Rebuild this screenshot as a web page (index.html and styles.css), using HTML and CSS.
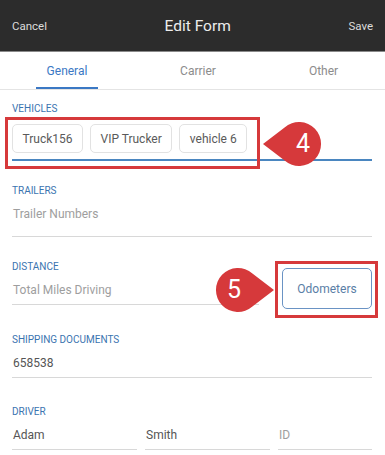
FILE: index.html
```html
<!DOCTYPE html>
<html lang="en">
<head>
  <meta charset="UTF-8">
  <meta name="viewport" content="width=device-width, initial-scale=1.0">
  <title>Edit Form</title>
  <link rel="stylesheet" href="styles.css">
</head>

<body>
  <div class="screen">
    <header class="top-bar">
      <span class="top-action">Cancel</span>
      <span class="top-title">Edit Form</span>
      <span class="top-action">Save</span>
    </header>

    <nav class="tabs">
      <span class="tab active">General</span>
      <span class="tab">Carrier</span>
      <span class="tab">Other</span>
    </nav>

    <form class="form">
      <div class="field vehicles">
        <label>Vehicles</label>
        <div class="chips">
          <span class="chip">Truck156</span>
          <span class="chip">VIP Trucker</span>
          <span class="chip">vehicle 6</span>
        </div>
      </div>

      <div class="field trailers">
        <label>Trailers</label>
        <div class="input placeholder tall">Trailer Numbers</div>
      </div>

      <div class="field distance">
        <div class="distance-main">
          <label>Distance</label>
          <div class="input placeholder">Total Miles Driving</div>
        </div>
        <button type="button" class="odometers">Odometers</button>
      </div>

      <div class="field shipping">
        <label>Shipping Documents</label>
        <div class="input">658538</div>
      </div>

      <div class="field driver">
        <label>Driver</label>
        <div class="driver-row">
          <div class="input">Adam</div>
          <div class="input">Smith</div>
          <div class="input placeholder">ID</div>
        </div>
      </div>
    </form>

    <!-- annotation overlays -->
    <div class="mark mark-vehicles"></div>
    <div class="mark mark-odometers"></div>

    <svg class="callout callout-4" width="70" height="50" viewBox="0 0 70 50">
      <path d="M2 24 L23.6 7.4 A22 22 0 1 1 23.6 40.6 Z" fill="#d6393b"/>
      <text x="42" y="32" text-anchor="middle">4</text>
    </svg>

    <svg class="callout callout-5" width="70" height="50" viewBox="0 0 70 50">
      <path d="M66 24 L44.4 7.4 A22 22 0 1 0 44.4 40.6 Z" fill="#d6393b"/>
      <text x="26" y="32" text-anchor="middle">5</text>
    </svg>
  </div>
</body>
</html>
```

FILE: styles.css
```css
body {
  margin: 0;
  font-family: Roboto, "Noto Sans", Arial, sans-serif;
  background-color: #fff;
}

.screen {
  position: relative;
  width: 385px;
  height: 455px;
  overflow: hidden;
}

.top-bar {
  height: 51px;
  background-color: #2c2c2c;
  border-bottom: 1px solid #8a8a8a;
  display: flex;
  align-items: center;
  justify-content: space-between;
  padding: 0 12px;
}

.top-action {
  font-size: 11.5px;
  color: #dcdcdc;
}

.top-title {
  font-size: 15.5px;
  color: #ececec;
}

.tabs {
  display: grid;
  grid-template-columns: 134px 128px 123px;
  height: 37px;
  border-bottom: 1px solid #e4e4e4;
}

.tab {
  display: flex;
  align-items: center;
  justify-content: center;
  font-size: 12px;
  color: #8c8c8c;
  padding-top: 1px;
}

.tab.active {
  color: #3b78c4;
  box-shadow: inset 0 -2px 0 #3b78c4;
  margin: 0 36px;
}

.form {
  padding: 13px 13px 0 12px;
}

.field label {
  display: block;
  font-size: 10px;
  line-height: 12px;
  color: #3b74b0;
  text-transform: uppercase;
  margin-bottom: 7px;
}

.input {
  font-size: 12px;
  line-height: 20px;
  color: #555;
  padding-left: 1px;
  padding-bottom: 4px;
  border-bottom: 1px solid #d8d8d8;
}

.input.placeholder {
  color: #9e9e9e;
}

.input.tall {
  padding-bottom: 12px;
}

.vehicles {
  margin-bottom: 24px;
}

.vehicles label {
  margin-bottom: 9px;
}

.chips {
  display: flex;
  gap: 7px;
  padding-bottom: 6px;
  border-bottom: 2px solid #4a86c0;
}

.chip {
  height: 27px;
  display: flex;
  align-items: center;
  padding: 0 9.5px;
  border: 1px solid #e2e2e2;
  border-radius: 5px;
  font-size: 12px;
  color: #5a5a5a;
}

.trailers {
  margin-bottom: 24px;
}

.distance {
  display: flex;
  align-items: flex-start;
  gap: 23px;
  margin-bottom: 25px;
}

.distance-main {
  flex: 0 0 247px;
}

.odometers {
  margin-top: 7px;
  width: 90px;
  height: 41px;
  background: #fff;
  border: 1px solid #6a93c4;
  border-radius: 5px;
  font-family: inherit;
  font-size: 12px;
  color: #5a7ea6;
}

.shipping {
  margin-bottom: 28px;
}

.driver-row {
  display: grid;
  grid-template-columns: 125px 125px 1fr;
  gap: 8px;
}

.mark {
  position: absolute;
  border: 3px solid #d6393b;
}

.mark-vehicles {
  left: 5px;
  top: 117px;
  width: 249px;
  height: 46px;
}

.mark-odometers {
  left: 275px;
  top: 261px;
  width: 97px;
  height: 51px;
}

.callout {
  position: absolute;
}

.callout text {
  font-family: Roboto, Arial, sans-serif;
  font-size: 25px;
  fill: #fff;
}

.callout-4 {
  left: 261px;
  top: 120px;
}

.callout-5 {
  left: 208px;
  top: 266px;
}
```
